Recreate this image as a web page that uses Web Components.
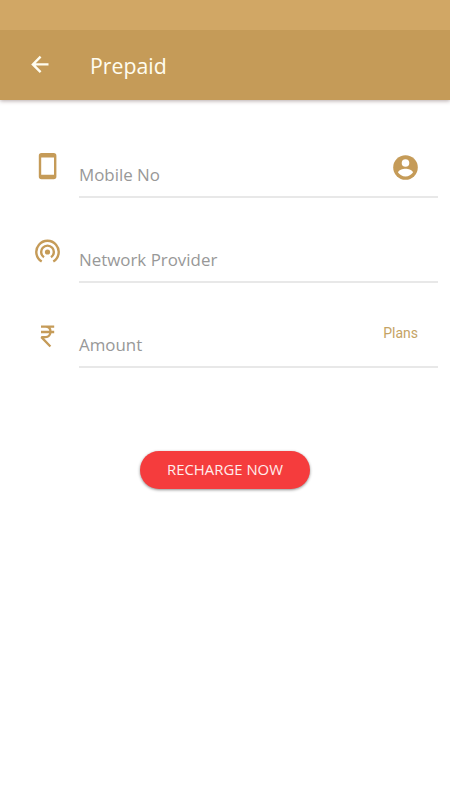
<!DOCTYPE html>
<html lang="en">
<head>
<meta charset="utf-8">
<title>Prepaid</title>
<style>
html, body { margin: 0; height: 100%; background: #fff; }
body { font-family: "Open Sans", "Noto Sans", sans-serif; overflow: hidden; }
</style>
</head>
<body>
<prepaid-page></prepaid-page>
<script>
const define = (name, html) => {
  const template = document.createElement('template');
  template.innerHTML = html;
  customElements.define(name, class extends HTMLElement {
    constructor() {
      super();
      this.attachShadow({ mode: 'open' }).append(template.content.cloneNode(true));
    }
  });
};

define('app-bar', `
<style>
:host { display: block; height: 100px; background: #c59b58; box-shadow: 0 1px 4px rgba(70,40,40,.4); color: #fffdf0; }
.status { height: 30px; background: #d1a765; }
.bar { height: 70px; display: flex; align-items: center; box-sizing: border-box; padding-left: 28px; }
svg { width: 24px; height: 24px; display: block; margin-bottom: 2px; }
h1 { margin: 0 0 0 38px; padding-top: 1px; font-size: 21.3px; line-height: 30px; font-weight: 400; }
</style>
<div class="status"></div>
<div class="bar">
<svg viewBox="0 0 24 24" fill="none" stroke="#fffdf0" stroke-width="2.4"><path d="M20.5 12.4H5M12.6 4.7l-7.7 7.7 7.7 7.7"/></svg>
<h1><slot></slot></h1>
</div>`);

define('form-field', `
<style>
:host { display: flex; height: 60px; }
.icon { width: 79px; box-sizing: border-box; padding: 13px 0 0 32px; }
.line { flex: 1; display: flex; justify-content: space-between; align-items: flex-start; border-bottom: 2px solid #e8e8e8; margin-right: 12px; box-sizing: border-box; }
.label { font-size: 16.9px; line-height: 24px; padding-top: 25px; color: #989898; white-space: nowrap; }
</style>
<div class="icon"><slot name="icon"></slot></div>
<div class="line"><span class="label"><slot></slot></span><slot name="action"></slot></div>`);

define('phone-icon', `
<style>:host, svg { display: block; width: 31px; height: 31px; }</style>
<svg viewBox="0 0 31 31"><path fill="#c59b58" fill-rule="evenodd" d="M9.5 2h12.2a2.7 2.7 0 0 1 2.7 2.7v20.9a2.7 2.7 0 0 1-2.7 2.7H9.5a2.7 2.7 0 0 1-2.7-2.7V4.7A2.7 2.7 0 0 1 9.5 2zM9.2 6.6v17.2H22V6.6z"/></svg>`);

define('hotspot-icon', `
<style>:host, svg { display: block; width: 31px; height: 31px; }</style>
<svg viewBox="0 0 31 31" fill="none" stroke="#c59b58" stroke-width="2.4"><circle cx="15.5" cy="16" r="2.6" fill="#c59b58" stroke="none"/><path d="M12 21.2a6.3 6.3 0 1 1 7 0M9.7 25.5a11.2 11.2 0 1 1 11.6 0"/></svg>`);

define('rupee-icon', `
<style>:host, svg { display: block; width: 31px; height: 31px; }</style>
<svg viewBox="0 0 31 31" fill="none" stroke="#c59b58" stroke-width="2.3"><path d="M9 5.6h13.2M9 11h13.2M9 5.6h4.5c3.3 0 5 2.3 5 5.2s-1.8 5.3-5 5.3H9.4l9 9.4" stroke-linejoin="bevel"/></svg>`);

define('contact-icon', `
<style>:host { display: block; margin: 17px 20px 0 0; } svg { display: block; width: 26px; height: 26px; }</style>
<svg viewBox="0 0 26 26"><circle cx="13.5" cy="12.5" r="12.3" fill="#c59b58"/><circle cx="13.5" cy="8" r="3.8" fill="#fff"/><path fill="#fff" d="M6 17.6c.1-2.4 4.9-3.8 7.5-3.8s7.4 1.4 7.5 3.8c-1.7 2.4-4.3 3.9-7.5 3.9S7.7 20 6 17.6z"/></svg>`);

define('plans-link', `
<style>:host { display: block; margin: 15px 20px 0 0; font: 400 14px/20px Roboto, sans-serif; color: #c5a364; }</style><slot></slot>`);

define('pill-button', `
<style>
:host { display: block; }
button { display: block; width: 170px; height: 38px; padding: 0 0 1px; border: 0; border-radius: 19px; background: #f53c3d; color: #ffeceb; font: 400 14.9px/37px "Open Sans", sans-serif; box-shadow: 0 1px 3px rgba(0,0,0,.45); white-space: nowrap; }
</style>
<button><slot></slot></button>`);

define('prepaid-page', `
<style>
:host { display: flex; flex-direction: column; height: 800px; background: #fff; }
.form { display: grid; gap: 25px; padding-top: 38px; }
.submit { display: flex; justify-content: center; padding-top: 83px; }
</style>
<app-bar>Prepaid</app-bar>
<div class="form">
<form-field><phone-icon slot="icon"></phone-icon>Mobile No<contact-icon slot="action"></contact-icon></form-field>
<form-field><hotspot-icon slot="icon"></hotspot-icon>Network Provider</form-field>
<form-field><rupee-icon slot="icon"></rupee-icon>Amount<plans-link slot="action">Plans</plans-link></form-field>
</div>
<div class="submit"><pill-button>RECHARGE NOW</pill-button></div>`);
</script>
</body>
</html>
